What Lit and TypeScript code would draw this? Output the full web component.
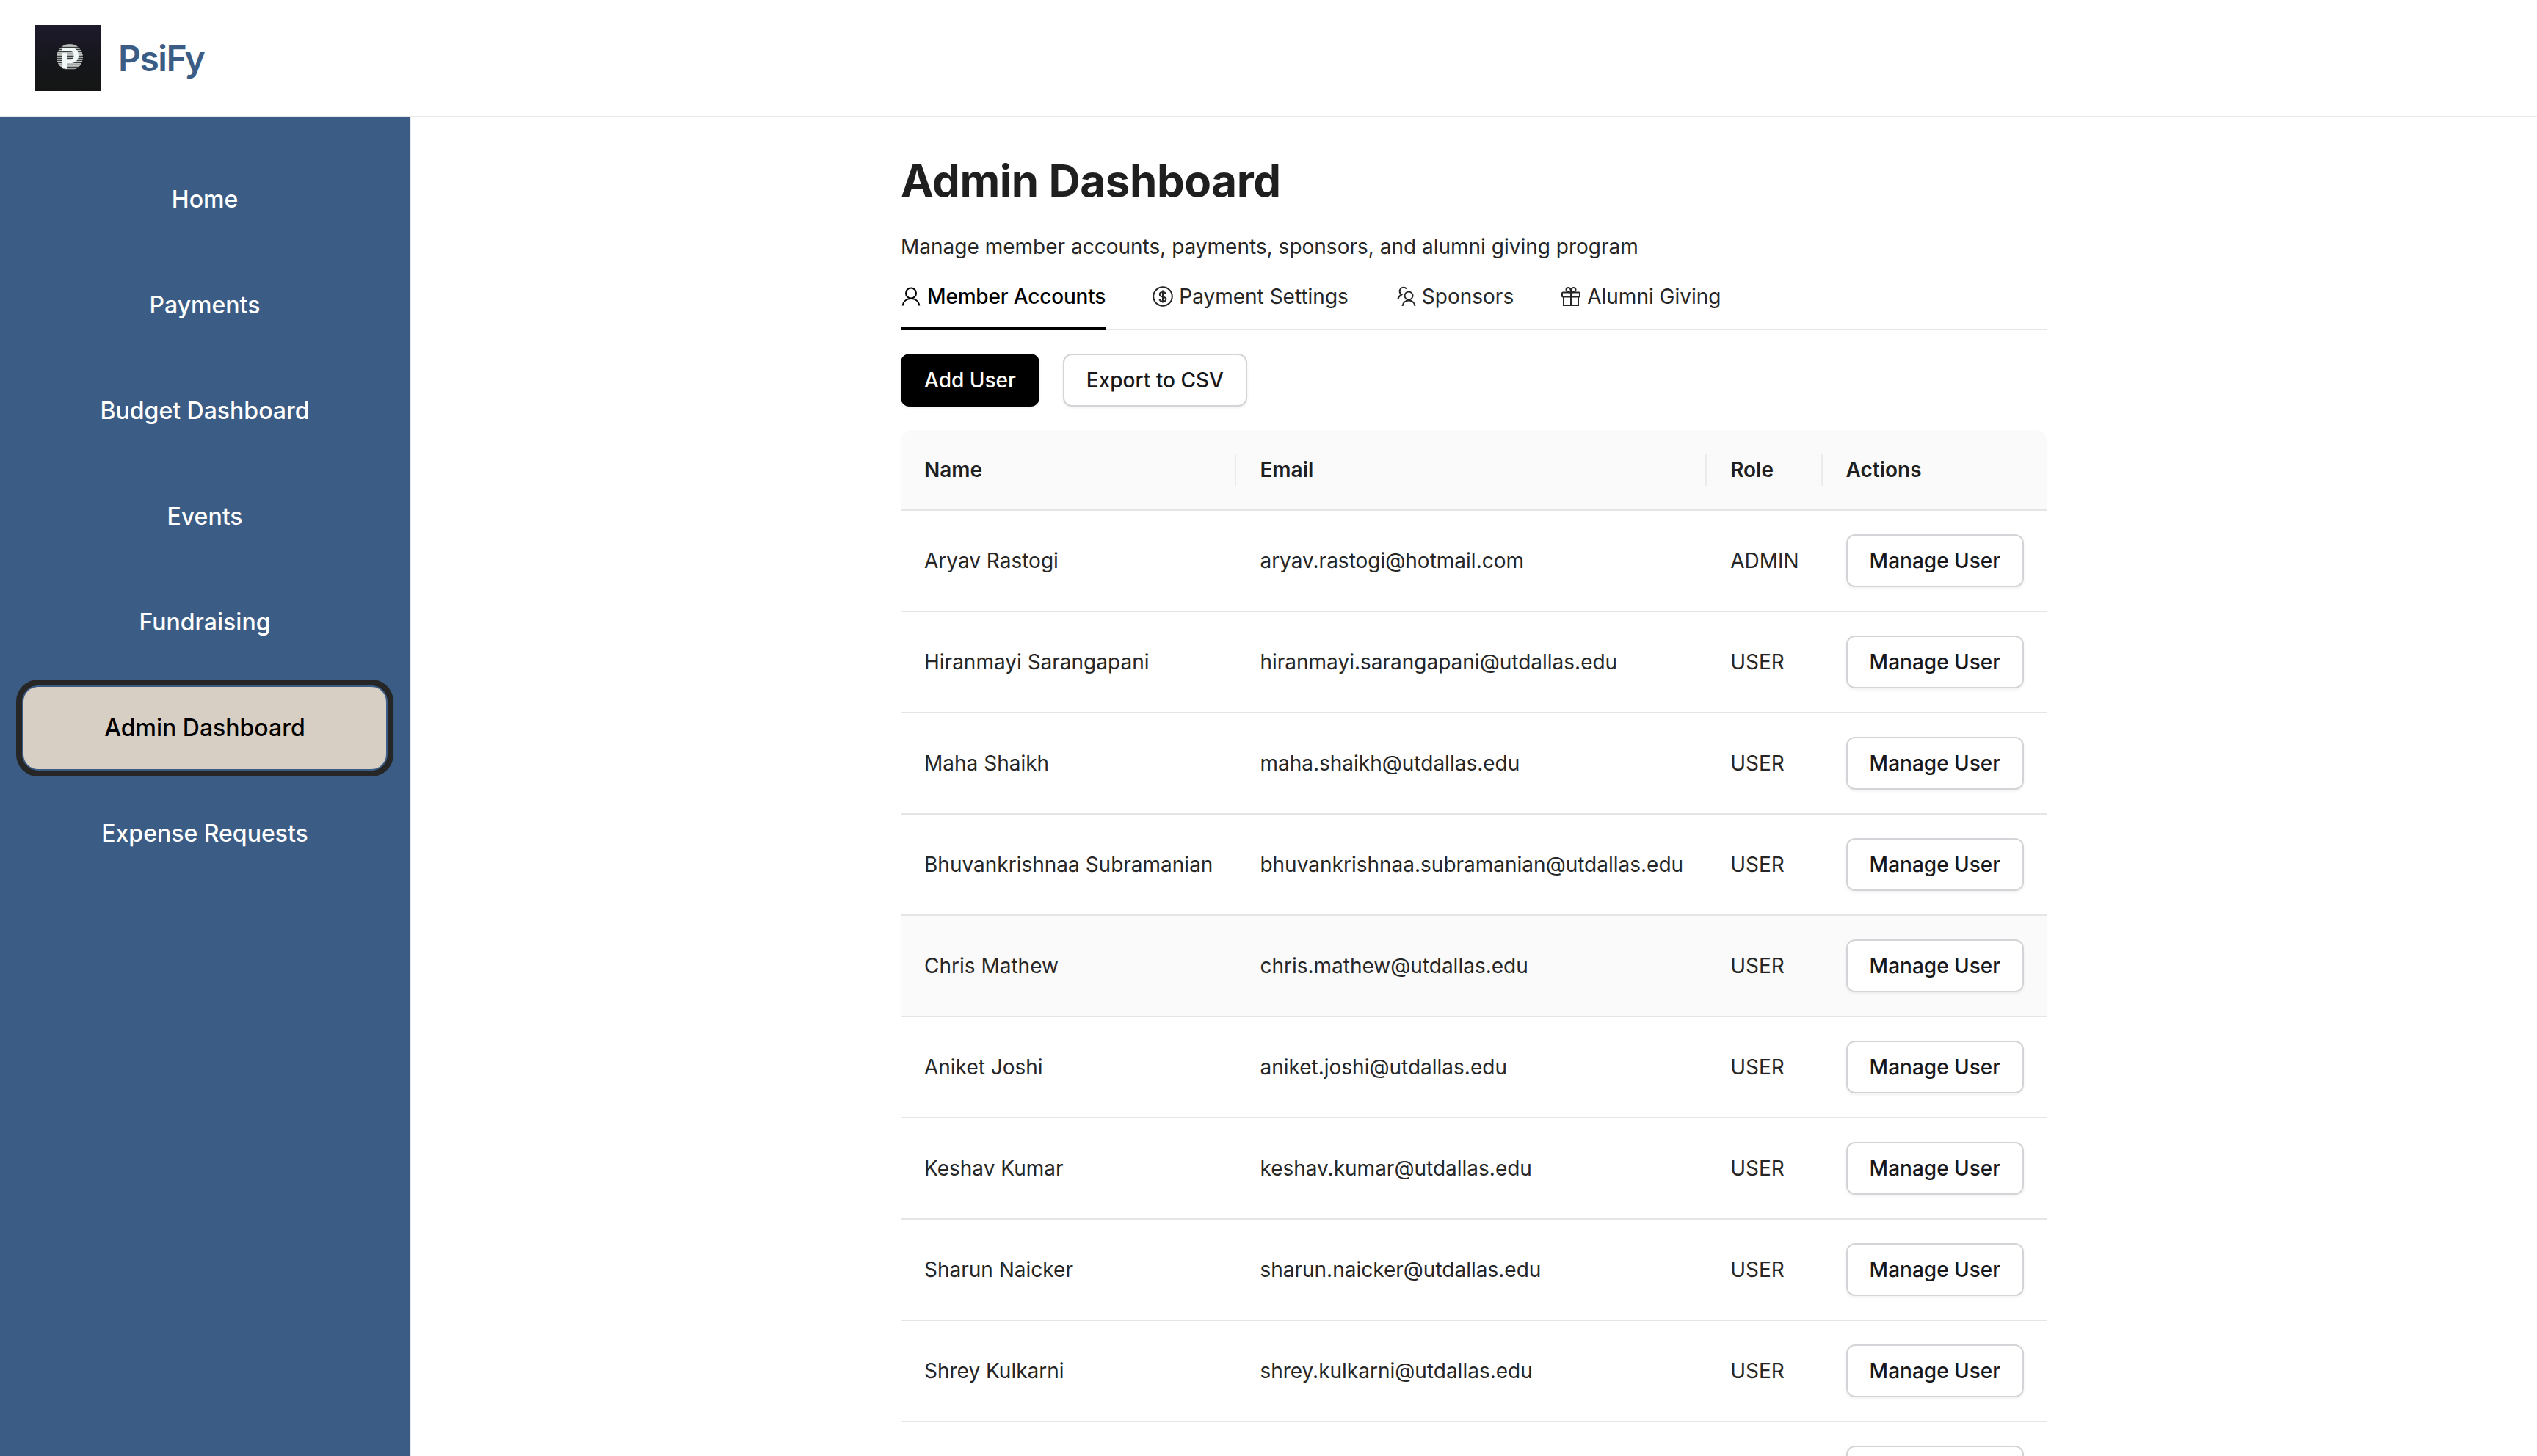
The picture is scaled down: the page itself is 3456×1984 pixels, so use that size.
import { LitElement, html, css, svg } from "lit";
import { customElement } from "lit/decorators.js";

const NAV = ["Home", "Payments", "Budget Dashboard", "Events", "Fundraising", "Admin Dashboard", "Expense Requests"];
const USERS: [string, string, string][] = [
  ["Aryav Rastogi", "aryav.rastogi@hotmail.com", "ADMIN"],
  ["Hiranmayi Sarangapani", "hiranmayi.sarangapani@utdallas.edu", "USER"],
  ["Maha Shaikh", "maha.shaikh@utdallas.edu", "USER"],
  ["Bhuvankrishnaa Subramanian", "bhuvankrishnaa.subramanian@utdallas.edu", "USER"],
  ["Chris Mathew", "chris.mathew@utdallas.edu", "USER"],
  ["Aniket Joshi", "aniket.joshi@utdallas.edu", "USER"],
  ["Keshav Kumar", "keshav.kumar@utdallas.edu", "USER"],
  ["Sharun Naicker", "sharun.naicker@utdallas.edu", "USER"],
  ["Shrey Kulkarni", "shrey.kulkarni@utdallas.edu", "USER"],
  ["", "", ""],
];

const ICON = {
  user: svg`<circle cx="14" cy="9.500" r="7"/><path d="M2.500 26.500C3.500 20.500 8 17 14 17s10.500 3.500 11.500 9.500"/>`,
  dollar: svg`<circle cx="14" cy="14" r="12.800"/><path d="M18 10.500C17.500 8.800 16 8 14 8c-2.500 0-4.200 1.300-4.200 3.200 0 4.500 8.600 2.300 8.600 6.400 0 2-1.900 3.200-4.400 3.200-2.300 0-4-1-4.500-2.800M14 5.500v17"/>`,
  sponsors: svg`<circle cx="18" cy="13" r="5.500"/><path d="M9.500 27c.5-4.500 4-7.500 8.500-7.500s8 3 8.500 7.500M15 3.500c-1-1-2.500-1.700-4-1.700-3 0-5.300 2.300-5.300 5.200 0 2 1 3.600 2.500 4.500-2.500 1.300-4.300 3.500-5 6.500"/>`,
  gift: svg`<rect x="2" y="8.500" width="24" height="6" rx="1"/><path d="M4 14.500V26h20V14.500M14 8.500V26M14 8.500C11 8.500 7.500 7.500 7.500 4.800 7.500 3 9 2 10.500 2 13 2 14 5 14 8.500zM14 8.500c3 0 6.500-1 6.500-3.700C20.500 3 19 2 17.500 2 15 2 14 5 14 8.500z"/>`,
};

const TABS: [string, keyof typeof ICON][] = [
  ["Member Accounts", "user"],
  ["Payment Settings", "dollar"],
  ["Sponsors", "sponsors"],
  ["Alumni Giving", "gift"],
];

const stripes = Array.from({ length: 14 }, (_, i) => 25 + i * 3);

@customElement("app-root")
export class AppRoot extends LitElement {
  static styles = css`
    :host { display: block; height: 100vh; overflow: hidden; background: #fff; color: #1f1f1f; font-family: Inter, "Liberation Sans", sans-serif; }
    .top { height: 158px; border-bottom: 2px solid #e8e8e8; display: flex; align-items: center; padding-left: 48px; gap: 23px; }
    .logo { width: 90px; height: 90px; display: block; }
    .brand { font-size: 48px; font-weight: 600; letter-spacing: -1.500px; color: #3b5c85; line-height: 60px; margin-top: 2px; }
    .body { display: flex; height: calc(100vh - 160px); }
    .side { width: 560px; box-sizing: border-box; flex: none; border-right: 2px solid #e8e8e8; background: #3b5c85; padding: 56px 32px 0; display: flex; flex-direction: column; gap: 32px; }
    .nav { height: 112px; box-sizing: border-box; padding-bottom: 2px; display: flex; align-items: center; justify-content: center; border-radius: 20px; font-size: 32px; font-weight: 500; color: #fff; flex: none; }
    .nav.active { background: #d8cfc4; color: #000; outline: 8px solid #262626; outline-offset: 2px; }
    .main { flex: 1; min-width: 0; display: flex; justify-content: center; overflow: hidden; padding-right: 1px; }
    .wrap { width: 1561px; padding-top: 50px; }
    h1 { margin: 0; font-size: 60px; line-height: 72px; font-weight: 700; letter-spacing: -0.400px; color: #1f1f1f; }
    .sub { margin: 34px 0 0; font-size: 28px; line-height: 40px; color: #262626; }
    .tabs { margin-top: 28px; display: flex; gap: 64px; border-bottom: 2px solid #e5e5e5; height: 64px; }
    .tab { display: flex; align-items: flex-start; gap: 8px; height: 66px; font-size: 28px; line-height: 40px; color: #262626; box-sizing: border-box; }
    .tab svg { width: 28px; height: 28px; margin-top: 6px; fill: none; stroke: currentColor; stroke-width: 2; flex: none; }
    .tab.active { color: #000; font-weight: 500; letter-spacing: -0.170px; border-bottom: 4px solid #000; }
    .actions { display: flex; gap: 32px; margin-top: 32px; }
    button { height: 72px; box-sizing: border-box; border-radius: 12px; border: 2px solid #d4d4d8; background: #fff; color: #18181b; font: 500 28px/40px Inter, "Liberation Sans", sans-serif; padding: 0 30px; box-shadow: 0 2px 4px rgba(0, 0, 0, 0.06); white-space: nowrap; }
    button.primary { background: #000; border-color: #000; color: #fff; }
    table { width: 100%; margin-top: 32px; border-collapse: separate; border-spacing: 0; font-size: 28px; }
    th { position: relative; height: 108px; padding: 0 32px; background: #fafafa; border-bottom: 2px solid #e5e5e5; text-align: left; font-weight: 600; color: #1f1f1f; white-space: nowrap; }
    th:first-child { border-top-left-radius: 16px; }
    th:last-child { border-top-right-radius: 16px; }
    th:not(:last-child)::after { content: ""; position: absolute; right: 0; top: 32px; width: 2px; height: 44px; background: #ececec; }
    td { height: 136px; padding: 0 32px; border-bottom: 2px solid #e5e5e5; color: #262626; white-space: nowrap; }
    tr.hover td { background: #fafafa; }
  `;

  private logo() {
    return html`<svg class="logo" viewBox="0 0 90 90" aria-label="PsiFy logo">
      <defs>
        <linearGradient id="lg" x1="0" y1="0" x2="0" y2="1"><stop offset="0" stop-color="#1d1a2c"/><stop offset="0.6" stop-color="#15161a"/><stop offset="1" stop-color="#151614"/></linearGradient>
        <clipPath id="cc"><circle cx="47" cy="44" r="18"/></clipPath>
      </defs>
      <rect width="90" height="90" fill="url(#lg)"/>
      <g clip-path="url(#cc)">
        <circle cx="47" cy="44" r="18" fill="#3a3d3d"/>
        ${stripes.map((y) => svg`<rect x="28" y="${y}" width="38" height="1.800" fill="#bfc2c0"/>`)}
      </g>
      <path d="M32 31H49C55.500 31 59 35.500 59 41.500S55 52 49 52H43V47.500H48C51 47.500 52.500 45 52.500 41.500S51 36 48 36H37L36 31z M37 38H43V60L37 58z" fill="#f0f8f8"/>
    </svg>`;
  }

  render() {
    return html`
      <header class="top">${this.logo()}<span class="brand">PsiFy</span></header>
      <div class="body">
        <nav class="side">
          ${NAV.map((n) => html`<div class="nav ${n === "Admin Dashboard" ? "active" : ""}">${n}</div>`)}
        </nav>
        <main class="main">
          <div class="wrap">
            <h1>Admin Dashboard</h1>
            <p class="sub">Manage member accounts, payments, sponsors, and alumni giving program</p>
            <div class="tabs">
              ${TABS.map(([t, i], idx) => html`<div class="tab ${idx === 0 ? "active" : ""}"><svg viewBox="0 0 28 28">${ICON[i]}</svg>${t}</div>`)}
            </div>
            <div class="actions">
              <button class="primary">Add User</button>
              <button>Export to CSV</button>
            </div>
            <table>
              <thead><tr><th>Name</th><th>Email</th><th>Role</th><th>Actions</th></tr></thead>
              <tbody>
                ${USERS.map((u, i) => html`<tr class="${i === 4 ? "hover" : ""}"><td>${u[0]}</td><td>${u[1]}</td><td>${u[2]}</td><td><button>Manage User</button></td></tr>`)}
              </tbody>
            </table>
          </div>
        </main>
      </div>
    `;
  }
}
